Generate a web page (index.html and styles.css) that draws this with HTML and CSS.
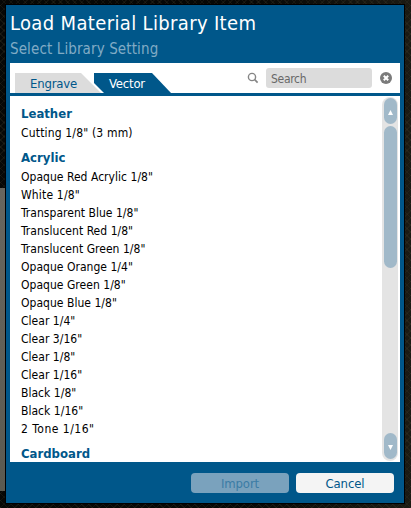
FILE: index.html
```
<!DOCTYPE html>
<html lang="en">
<head>
<meta charset="utf-8">
<title>Load Material Library Item</title>
<link rel="stylesheet" href="styles.css">
</head>
<body>
<div class="page-edge"></div>
<main class="dialog">
  <header class="heading">
    <h1>Load Material Library Item</h1>
    <p>Select Library Setting</p>
  </header>
  <div class="toolbar">
    <nav class="tabs">
      <a class="tab engrave"><span>Engrave</span></a>
      <a class="tab vector"><span>Vector</span></a>
    </nav>
    <svg class="magnifier" width="12" height="12" viewBox="0 0 12 12"><circle cx="5" cy="5" r="3.6" fill="none" stroke="#858585" stroke-width="1.4"/><path d="M7.7 7.7 10.6 10.6" stroke="#858585" stroke-width="1.7"/></svg>
    <div class="search">Search</div>
    <svg class="clear" width="12" height="12" viewBox="0 0 12 12"><circle cx="6" cy="6" r="6" fill="#7b7b7b"/><path d="M3.8 3.8 8.2 8.2M8.2 3.8 3.8 8.2" stroke="#fff" stroke-width="2"/></svg>
  </div>
  <section class="content">
    <div class="list">
      <h2>Leather</h2>
      <ul><li class="wide">Cutting 1/8" (3 mm)</li></ul>
      <h2>Acrylic</h2>
      <ul>
        <li>Opaque Red Acrylic 1/8"</li>
        <li class="wide">White 1/8"</li>
        <li>Transparent Blue 1/8"</li>
        <li>Translucent Red 1/8"</li>
        <li>Translucent Green 1/8"</li>
        <li>Opaque Orange 1/4"</li>
        <li>Opaque Green 1/8"</li>
        <li>Opaque Blue 1/8"</li>
        <li>Clear 1/4"</li>
        <li>Clear 3/16"</li>
        <li>Clear 1/8"</li>
        <li>Clear 1/16"</li>
        <li>Black 1/8"</li>
        <li>Black 1/16"</li>
        <li class="widest">2 Tone 1/16"</li>
      </ul>
      <h2>Cardboard</h2>
    </div>
    <div class="scrollbar">
      <div class="arrow"><svg width="5" height="5" viewBox="0 0 5 5"><path d="M2.5 0 5 5H0Z" fill="#fff"/></svg></div>
      <div class="thumb"></div>
      <div class="arrow down"><svg width="5" height="5" viewBox="0 0 5 5"><path d="M0 0H5L2.5 5Z" fill="#fff"/></svg></div>
    </div>
  </section>
  <footer class="actions">
    <div class="button disabled">Import</div>
    <div class="button">Cancel</div>
  </footer>
</main>
</body>
</html>
```
FILE: styles.css
```
* { box-sizing: border-box; }
body {
  margin: 0;
  width: 411px;
  height: 508px;
  overflow: hidden;
  display: flex;
  align-items: flex-start;
  font-family: "DejaVu Sans Condensed", "DejaVu Sans", sans-serif;
  font-stretch: condensed;
  background:
    repeating-linear-gradient(45deg, rgba(70, 66, 48, .22) 0 1px, transparent 1px 5px),
    repeating-linear-gradient(-45deg, rgba(70, 66, 48, .2) 0 1px, transparent 1px 5px),
    linear-gradient(90deg, #070806 0 60%, #1b1a13);
}
.page-edge { width: 5px; height: 303px; margin-top: 188px; background: linear-gradient(#67665f, #5b5a51); flex: none; }
.dialog {
  width: 398px;
  height: 498px;
  margin: 5px 0 0 1px;
  padding: 0 4px;
  background: #00578a;
  box-shadow: 0 0 0 1px #000;
  display: flex;
  flex-direction: column;
  flex: none;
}
.heading { height: 58px; }
h1, h2, p, ul { margin: 0; padding: 0; font-weight: normal; }
h1 { font-size: 20px; line-height: 26px; padding-top: 5px; color: #fff; white-space: nowrap; letter-spacing: .35px; }
p { font-size: 15px; line-height: 20px; margin-top: 3px; color: #80abc5; letter-spacing: .12px; }
.toolbar { height: 30px; background: #fff; display: flex; align-items: center; padding-right: 8px; }
.tabs { display: flex; align-self: flex-end; margin-left: 5px; }
.tab { height: 20px; font-size: 13px; line-height: 21px; letter-spacing: -.2px; }
.engrave { width: 86px; padding-left: 15px; color: #00578a; background: #dcdcdc; clip-path: polygon(0 0, 66px 0, 86px 20px, 0 20px); }
.vector { width: 77px; margin-left: -7px; padding-left: 15px; color: #fff; background: #00578a; clip-path: polygon(0 0, 58px 0, 77px 20px, 10px 20px, 0 10px); }
.magnifier { margin-left: auto; }
.search { width: 106px; height: 20px; margin: 0 8px 0 7px; padding-left: 5px; background: #dcdcdc; border-radius: 3px; color: #686868; font-size: 12px; line-height: 22px; letter-spacing: -.3px; }
.content { height: 366px; margin-top: 3px; background: #fff; display: flex; justify-content: space-between; overflow: hidden; padding-right: 2px; }
.list { padding: 8px 0 0 11px; white-space: nowrap; }
h2 { font-size: 13px; line-height: 20px; font-weight: bold; color: #00578a; }
ul { list-style: none; padding: 0 0 6px; font-size: 12px; line-height: 18px; color: #000; letter-spacing: .03px; }
.wide { letter-spacing: .17px; }
.widest { letter-spacing: .5px; }
.scrollbar { width: 16px; height: 364px; margin-top: 1px; padding: 1px 1px 2px 2px; border-radius: 8px; background: #e4e4e4; display: flex; flex-direction: column; }
.arrow { height: 26px; border-radius: 7px; background: #a1b9c9; display: flex; align-items: center; justify-content: center; padding-top: 3px; }
.thumb { height: 142px; margin-top: 2px; border-radius: 7px; background: #a1b9c9; }
.down { margin-top: auto; padding-top: 2px; }
.actions { display: flex; justify-content: flex-end; gap: 7px; padding: 11px 6px 0; }
.button { width: 98px; height: 20px; border-radius: 4px; background: #f4f4f4; color: #00578a; font-size: 13px; line-height: 21px; text-align: center; letter-spacing: -.1px; }
.disabled { background: #7aa2bd; color: #3b7ca5; }
```
